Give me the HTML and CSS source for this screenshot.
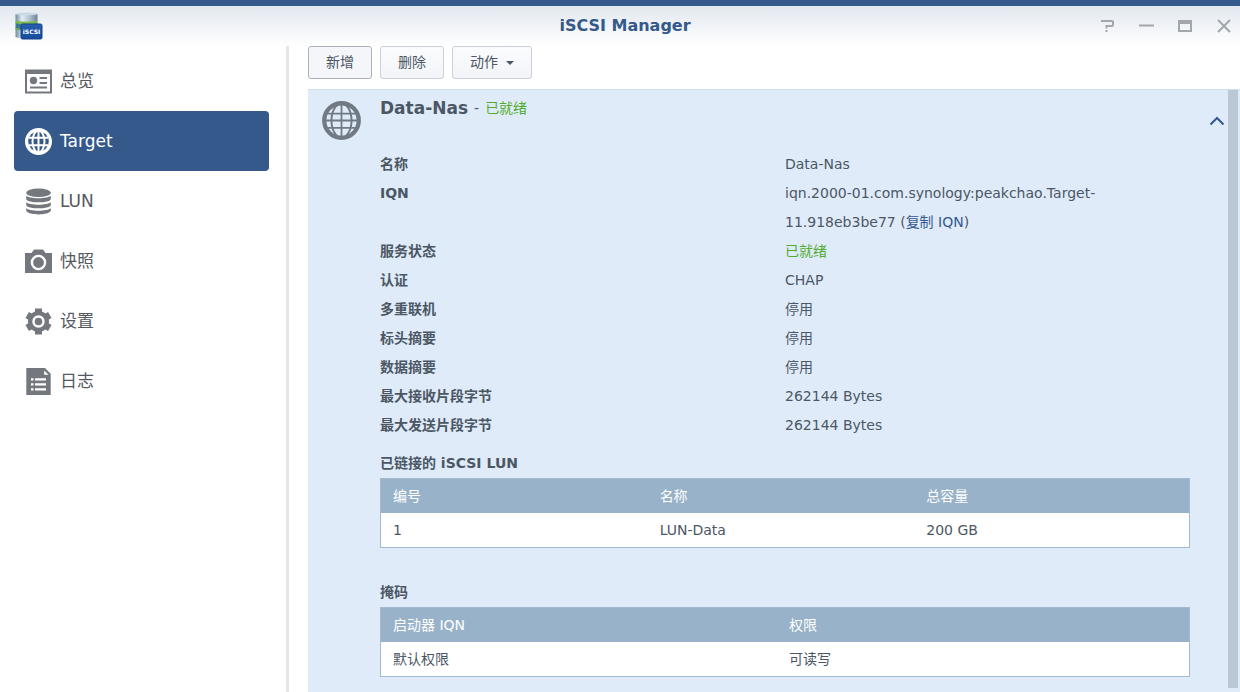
FILE: index.html
```html
<!DOCTYPE html>
<html lang="zh-CN">
<head>
<meta charset="utf-8">
<title>iSCSI Manager</title>
<link rel="stylesheet" href="styles.css">
</head>
<body>
<div class="window">
  <header class="titlebar">
    <svg class="logo" viewBox="0 0 30 30" aria-hidden="true">
      <defs>
        <linearGradient id="metal" x1="0" x2="1"><stop offset="0" stop-color="#71899d"/><stop offset=".3" stop-color="#e4eef5"/><stop offset=".65" stop-color="#aebfce"/><stop offset="1" stop-color="#6b8297"/></linearGradient>
        <linearGradient id="label" x2="0" y2="1"><stop offset="0" stop-color="#285eb0"/><stop offset="1" stop-color="#174b9f"/></linearGradient>
      </defs>
      <path d="M1.500 17v9c2 1.500 20 1.500 22 0v-9z" fill="url(#metal)"/>
      <path d="M1.500 11v6c2 1.500 20 1.500 22 0v-6z" fill="#397997"/>
      <path d="M1.500 9v3c2 1.800 20 1.800 22 0V9z" fill="#79b94a"/>
      <path d="M1.500 3v6.500c2 1.500 20 1.500 22 0V3z" fill="url(#metal)"/>
      <ellipse cx="12.500" cy="3" rx="11" ry="1.500" fill="#c9d8e5"/>
      <path d="M1.500 17.500c2 1 4 1 6 1" fill="none" stroke="#6ca93f" stroke-width="1.500"/>
      <rect x="7" y="13" width="21" height="15" rx="1.500" fill="url(#label)" stroke="#174486"/>
      <text x="17.500" y="23" text-anchor="middle" class="logo-text">iSCSI</text>
    </svg>
    <h1 class="title">iSCSI Manager</h1>
    <div class="controls">
      <button class="control" aria-label="帮助"><svg viewBox="0 0 16 16"><path d="M2 3h11c1 0 1 0 1 1v3c0 1 0 1-1 1H7.500v2.500" fill="none" stroke="currentColor" stroke-width="2"/><path d="M6.500 12h2v2h-2z" fill="currentColor"/></svg></button>
      <button class="control" aria-label="最小化"><svg viewBox="0 0 16 16"><path d="M1 7.500h15" stroke="currentColor" stroke-width="2"/></svg></button>
      <button class="control" aria-label="最大化"><svg viewBox="0 0 16 16"><path d="M1 2h14v12H1zM3 6v6h10V6z" fill="currentColor" fill-rule="evenodd"/></svg></button>
      <button class="control" aria-label="关闭"><svg viewBox="0 0 16 16"><path d="M2 2l12 12M14 2L2 14" stroke="currentColor" stroke-width="2"/></svg></button>
    </div>
  </header>
  <div class="body">
    <nav class="sidebar">
      <a class="item" href="#overview"><svg viewBox="0 0 27 27"><path d="M0 1.500h27v24H0zM2 6v17.500h23V6z" fill="currentColor" fill-rule="evenodd"/><circle cx="8.500" cy="12.500" r="3.700" fill="currentColor"/><path d="M14.500 10H22M14.500 15H22M5 19.500h17" stroke="currentColor" stroke-width="2"/></svg>总览</a>
      <a class="item active" href="#target" aria-current="page"><svg viewBox="0 0 27 27"><circle cx="13.500" cy="13.500" r="13.500" fill="#fff"/><circle cx="13.500" cy="13.500" r="10.300" fill="#34598a"/><g fill="none" stroke="#fff" stroke-width="2"><path d="M13.500 2v23M4 9.800h19M4 17.200h19"/><ellipse cx="13.500" cy="13.500" rx="6" ry="11"/></g></svg>Target</a>
      <a class="item" href="#lun"><svg viewBox="0 0 27 27"><g fill="currentColor"><ellipse cx="13.500" cy="4.800" rx="12.300" ry="4.300"/><path d="M1.200 7.500c3 3.600 21.600 3.600 24.600 0v3.700c-2 4.200-22.600 4.200-24.600 0zM1.200 14c3 3.600 21.600 3.600 24.600 0v3.200c-2 4.200-22.600 4.200-24.600 0zM1.200 20c3 3.600 21.600 3.600 24.600 0v2.800c-2 4.800-22.600 4.800-24.600 0z"/></g></svg>LUN</a>
      <a class="item" href="#snapshot"><svg viewBox="0 0 27 27"><path d="M0 5h6.500L9 1.500h9L20.500 5H27v20H0z" fill="currentColor"/><circle cx="13.500" cy="14.500" r="6.600" fill="none" stroke="#fff" stroke-width="2.400"/></svg>快照</a>
      <a class="item" href="#settings"><svg viewBox="0 0 27 27"><circle cx="13.500" cy="13.500" r="10.600" fill="currentColor"/><path d="M13.500.5v26M2.200 7l22.600 13M2.200 20L24.800 7" stroke="currentColor" stroke-width="7"/><circle cx="13.500" cy="13.500" r="5" fill="none" stroke="#fff" stroke-width="2.400"/></svg>设置</a>
      <a class="item" href="#log"><svg viewBox="0 0 27 27"><path d="M1.300 0H20l5.700 5.700V27H1.300z" fill="currentColor"/><path d="M19.200 2.500v4.300H23.500z" fill="#fff"/><path d="M6 11.300h2.500M10 11.300h11M6 16.300h2.500M10 16.300h11M6 21.300h2.500M10 21.300h11" stroke="#fff" stroke-width="2.200"/></svg>日志</a>
    </nav>
    <main class="main">
      <div class="toolbar">
        <button class="btn btn-focus">新增</button>
        <button class="btn">删除</button>
        <button class="btn">动作<span class="caret"></span></button>
      </div>
      <div class="panel">
        <section class="content">
          <svg class="globe" viewBox="0 0 40 40" aria-hidden="true"><g fill="none" stroke="currentColor"><circle cx="20" cy="20" r="17.700" stroke-width="4.400"/><path d="M20 2v36M5 13h30M3 20h34M5 27.500h30" stroke-width="1.800"/><ellipse cx="20" cy="20" rx="10.300" ry="17.500" stroke-width="2"/></g></svg>
          <div class="details">
            <div class="heading"><h2 class="name">Data-Nas</h2><span>-</span><span class="ready">已就绪</span></div>
            <dl class="props">
              <dt>名称</dt><dd>Data-Nas</dd>
              <dt>IQN</dt><dd>iqn.2000-01.com.synology:peakchao.Target-<wbr>11.918eb3be77 (<a class="copy" href="#copy">复制 IQN</a>)</dd>
              <dt>服务状态</dt><dd class="ready">已就绪</dd>
              <dt>认证</dt><dd>CHAP</dd>
              <dt>多重联机</dt><dd>停用</dd>
              <dt>标头摘要</dt><dd>停用</dd>
              <dt>数据摘要</dt><dd>停用</dd>
              <dt>最大接收片段字节</dt><dd>262144 Bytes</dd>
              <dt>最大发送片段字节</dt><dd>262144 Bytes</dd>
            </dl>
            <h3 class="caption" id="luns">已链接的 iSCSI LUN</h3>
            <table class="grid thirds" aria-labelledby="luns">
              <thead><tr><th>编号</th><th>名称</th><th>总容量</th></tr></thead>
              <tbody><tr><td>1</td><td>LUN-Data</td><td>200 GB</td></tr></tbody>
            </table>
            <h3 class="caption" id="masks">掩码</h3>
            <table class="grid halves" aria-labelledby="masks">
              <thead><tr><th>启动器 IQN</th><th>权限</th></tr></thead>
              <tbody><tr><td>默认权限</td><td>可读写</td></tr></tbody>
            </table>
          </div>
          <button class="collapse" aria-label="收起"><svg viewBox="0 0 16 10"><path d="M1.500 8.500L8 2l6.500 6.500" fill="none" stroke="currentColor" stroke-width="2"/></svg></button>
        </section>
        <div class="scrollbar"></div>
      </div>
    </main>
  </div>
</div>
</body>
</html>
```
FILE: styles.css
```css
* { box-sizing: border-box; }
body {
  margin: 0;
  font: 14px/29px Verdana, "DejaVu Sans", "Noto Sans CJK SC", sans-serif;
  color: #4b5764;
  background: #fff;
}
button { font: inherit; color: inherit; padding: 0; margin: 0; border: 0; background: none; }
h1, h2, h3, dl, dd { margin: 0; }
svg { display: block; }
.window { display: flex; flex-direction: column; min-height: 100vh; border-top: 6px solid #34598d; }
.titlebar {
  display: grid;
  grid-template-columns: 1fr auto 1fr;
  align-items: center;
  height: 40px;
  padding: 0 8px 0 14px;
  background: linear-gradient(#e2e8ef, #fff);
}
.logo { width: 30px; height: 30px; }
.logo-text { font: bold 6px "DejaVu Sans", sans-serif; fill: #fff; }
.title { padding-left: 4px; font-size: 16px; line-height: 40px; color: #34598a; }
.controls { display: flex; justify-content: flex-end; gap: 23px; color: #a3a7ac; }
.control svg { width: 16px; height: 16px; }
.body { display: flex; flex: 1; }
.sidebar { flex: none; width: 289px; padding: 5px 17px 0 14px; border-right: 3px solid #e6e6e8; }
.item {
  display: flex;
  align-items: center;
  gap: 8px;
  height: 60px;
  padding-left: 11px;
  border-radius: 4px;
  font-size: 17px;
  color: #55595f;
  text-decoration: none;
}
.item svg { width: 27px; height: 27px; color: #74787e; }
.item.active { background: #34598a; color: #fff; }
.main { display: flex; flex-direction: column; flex: 1; min-width: 0; padding-left: 19px; }
.toolbar { display: flex; gap: 8px; padding-bottom: 10px; }
.btn {
  display: flex;
  align-items: center;
  height: 33px;
  padding: 0 17px;
  border: 1px solid #cbd0d8;
  border-radius: 3px;
  background: linear-gradient(#fbfcfd, #f2f4f9);
}
.btn-focus { border-color: #abb1bb; background: #f4f6fa; }
.caret { margin-left: 8px; border: 4px solid transparent; border-top-color: #4b5764; border-bottom: 0; }
.panel { display: flex; flex: 1; padding-right: 2px; background: #dfebf9; border-top: 1px solid #d2dfed; }
.content { display: flex; flex: 1; min-width: 0; padding: 0 3px 14px 14px; align-items: flex-start; }
.globe { flex: none; width: 39px; height: 39px; margin: 11px 19px 0 0; color: #717a84; }
.details { flex: 1; min-width: 0; }
.heading { display: flex; gap: 6px; height: 60px; line-height: 36px; }
.name { font-size: 17px; }
.ready { color: #53ab2e; }
.props { display: grid; grid-template-columns: 1fr 1fr; }
.props dt { font-weight: bold; }
.copy { color: #34598f; text-decoration: none; }
.caption { margin-top: 9px; font-size: 14px; }
.grid { width: 100%; table-layout: fixed; border-spacing: 0; border: 1px solid #a2b9d0; background: #fff; line-height: 34px; }
.grid th, .grid td { padding: 0 12px; text-align: left; font-weight: normal; }
.grid th { background: #98b2c9; color: #fff; }
.grid + .caption { margin-top: 30px; }
.thirds th:not(:last-child) { width: 33%; }
.halves th:first-child { width: 49%; }
.collapse { flex: none; margin: 26px 0 0 19px; color: #34598f; }
.collapse svg { width: 16px; height: 10px; }
.scrollbar { width: 10px; margin-bottom: 4px; background: #bac7d4; }
```
